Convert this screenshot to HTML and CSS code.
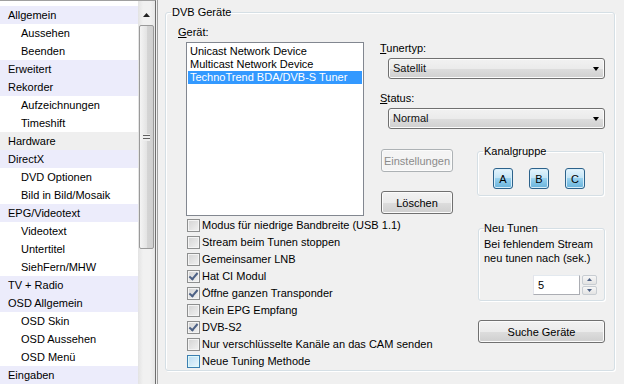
FILE: index.html
```html
<!DOCTYPE html>
<html lang="de">
<head>
  <meta charset="UTF-8" />
  <title>DVB Geräte</title>
  <link rel="stylesheet" href="styles.css">
</head>
<body>
  <div class="window">
    <!-- Settings tree -->
    <div class="tree">
      <ul class="tree-list">
        <li class="node top">Allgemein</li>
        <li class="node child">Aussehen</li>
        <li class="node child">Beenden</li>
        <li class="node top">Erweitert</li>
        <li class="node top">Rekorder</li>
        <li class="node child">Aufzeichnungen</li>
        <li class="node child">Timeshift</li>
        <li class="node top current">Hardware</li>
        <li class="node top">DirectX</li>
        <li class="node child">DVD Optionen</li>
        <li class="node child">Bild in Bild/Mosaik</li>
        <li class="node top">EPG/Videotext</li>
        <li class="node child">Videotext</li>
        <li class="node child">Untertitel</li>
        <li class="node child">SiehFern/MHW</li>
        <li class="node top">TV + Radio</li>
        <li class="node top">OSD Allgemein</li>
        <li class="node child">OSD Skin</li>
        <li class="node child">OSD Aussehen</li>
        <li class="node child">OSD Menü</li>
        <li class="node top">Eingaben</li>
      </ul>
      <div class="scrollbar">
        <div class="sb-btn">
          <svg width="7" height="4" viewBox="0 0 7 4"><path d="M0 4 L3.5 0 L7 4 Z" fill="#222"/></svg>
        </div>
        <div class="sb-thumb"><span class="grip"></span></div>
      </div>
    </div>

    <!-- Hardware page -->
    <div class="panel">
      <fieldset class="group main">
        <legend>DVB Geräte</legend>
        <div class="top-row">
          <div class="device-col">
            <div class="lbl"><u>G</u>erät:</div>
            <ul class="listbox">
              <li>Unicast Network Device</li>
              <li>Multicast Network Device</li>
              <li class="selected">TechnoTrend BDA/DVB-S Tuner</li>
            </ul>
          </div>
          <div class="settings-col">
            <div class="lbl"><u>T</u>unertyp:</div>
            <div class="combo">Satellit<span class="arrow"></span></div>
            <div class="lbl status-lbl"><u>S</u>tatus:</div>
            <div class="combo">Normal<span class="arrow"></span></div>
            <div class="action-row">
              <div class="action-btns">
                <button class="btn" disabled>Einstellungen</button>
                <button class="btn delete">Löschen</button>
              </div>
              <fieldset class="group channel">
                <legend>Kanalgruppe</legend>
                <button class="ch">A</button>
                <button class="ch">B</button>
                <button class="ch">C</button>
              </fieldset>
            </div>
          </div>
        </div>
        <div class="bottom-row">
          <ul class="checks">
            <li><span class="box"></span>Modus für niedrige Bandbreite (USB 1.1)</li>
            <li><span class="box"></span>Stream beim Tunen stoppen</li>
            <li><span class="box"></span>Gemeinsamer LNB</li>
            <li><span class="box checked"></span>Hat CI Modul</li>
            <li><span class="box checked"></span>Öffne ganzen Transponder</li>
            <li><span class="box"></span>Kein EPG Empfang</li>
            <li><span class="box checked"></span>DVB-S2</li>
            <li><span class="box"></span>Nur verschlüsselte Kanäle an das CAM senden</li>
            <li><span class="box hover"></span>Neue Tuning Methode</li>
          </ul>
          <div class="side">
            <fieldset class="group retune">
              <legend>Neu Tunen</legend>
              <p>Bei fehlendem Stream<br>neu tunen nach (sek.)</p>
              <div class="spin-row">
                <div class="spin-input">5</div>
                <div class="spin-btns">
                  <span class="spin-btn"><svg width="5" height="3" viewBox="0 0 5 3"><path d="M0 3 L2.5 0 L5 3 Z" fill="#4d6185"/></svg></span>
                  <span class="spin-btn"><svg width="5" height="3" viewBox="0 0 5 3"><path d="M0 0 L2.5 3 L5 0 Z" fill="#4d6185"/></svg></span>
                </div>
              </div>
            </fieldset>
            <button class="btn search">Suche Geräte</button>
          </div>
        </div>
      </fieldset>
    </div>
  </div>
</body>
</html>
```

FILE: styles.css
```css
/* Basic reset */
* {
  box-sizing: border-box;
  margin: 0;
  padding: 0;
}
body {
  background-color: #f0f0f0;
  color: #000;
  font-family: "Liberation Sans", Arial, sans-serif;
  font-size: 11px;
  line-height: 13px;
  width: 624px;
  height: 384px;
  overflow: hidden;
}
ul {
  list-style: none;
}
.window {
  display: flex;
  height: 384px;
}

/* Left settings tree */
.tree {
  display: flex;
  width: 156px;
  height: 384px;
  background: #fff;
  border-top: 1px solid #a0a0a0;
  border-right: 1px solid #6d6d6d;
}
.tree-list {
  width: 138px;
  padding-top: 5px;
}
.node {
  height: 18px;
  line-height: 18px;
  white-space: nowrap;
}
.node.top {
  padding-left: 8px;
  background-color: #ececfb;
}
.node.top.current {
  background-color: #efefef;
}
.node.child {
  padding-left: 21px;
}
.scrollbar {
  width: 17px;
  padding-top: 5px;
  background: linear-gradient(to right, #e3e3e3, #f1f1f1 30%, #f1f1f1 70%, #e6e6e6);
}
.sb-btn {
  height: 18px;
  display: flex;
  justify-content: center;
  align-items: center;
}
.sb-thumb {
  height: 224px;
  margin: 1px 1px 0 1px;
  border: 1px solid #9a9a9a;
  border-radius: 2px;
  background: linear-gradient(to right, #f4f4f4, #e4e4e4 50%, #d5d5d5 51%, #cfcfcf);
  display: flex;
  justify-content: center;
  align-items: center;
}
.grip {
  width: 7px;
  height: 7px;
  background: repeating-linear-gradient(#eeeeee 0, #eeeeee 1px, #5f5f5f 1px, #5f5f5f 2px, #eeeeee 2px, #eeeeee 3px);
}

/* Right page */
.panel {
  flex: 1;
  margin-left: 1px;
  border-left: 1px solid #a0a0a0;
  padding: 6px 9px 0 7px;
}
.group {
  border: 1px solid #d5dfe5;
  border-radius: 3px;
  box-shadow: inset 1px 1px 0 #fff, 1px 1px 0 #fff;
}
.group legend {
  line-height: 13px;
}
.main {
  height: 365px;
  padding: 7px 9px 0 12px;
}
.main > legend {
  margin-left: -7px;
  padding: 0 1px;
}
.lbl {
  height: 13px;
}
.top-row {
  display: flex;
}
.device-col {
  width: 186px;
}
.listbox {
  margin: 3px 0 0 8px;
  width: 178px;
  height: 174px;
  background: #fff;
  border: 1px solid #828790;
  padding: 2px 1px;
}
.listbox li {
  height: 13px;
  padding-left: 2px;
  white-space: nowrap;
}
.listbox li.selected {
  background-color: #3399ff;
  color: #fff;
}
.settings-col {
  width: 224px;
  margin-left: 16px;
  padding-top: 16px;
}
.combo {
  position: relative;
  margin: 3px 0 0 8px;
  width: 217px;
  height: 21px;
  line-height: 19px;
  padding-left: 4px;
  border: 1px solid #707070;
  border-radius: 3px;
  background: linear-gradient(#f2f2f2, #ebebeb 50%, #dddddd 51%, #cfcfcf);
  box-shadow: inset 0 0 0 1px #fbfbfb;
  color: #111;
}
.combo .arrow {
  position: absolute;
  right: 5px;
  top: 8px;
  border-left: 3.5px solid transparent;
  border-right: 3.5px solid transparent;
  border-top: 4px solid #000;
}
.status-lbl {
  margin-top: 13px;
}
.action-row {
  display: flex;
  justify-content: space-between;
  margin-top: 20px;
}
.action-btns {
  margin-left: 1px;
  display: flex;
  flex-direction: column;
}
.btn {
  font-family: inherit;
  font-size: 11px;
  color: #000;
  width: 72px;
  height: 23px;
  border: 1px solid #707070;
  border-radius: 3px;
  background: linear-gradient(#f2f2f2, #ebebeb 50%, #dddddd 51%, #cfcfcf);
  box-shadow: inset 0 0 0 1px #fbfbfb;
}
.btn:disabled {
  color: #8b8b8b;
  border-color: #adb2b5;
  background: #f4f4f4;
}
.btn.delete {
  margin-top: 19px;
}
.channel {
  width: 127px;
  height: 51px;
  margin-top: -4px;
  padding: 10px 0 0 15px;
  display: flex;
  gap: 16px;
}
.channel legend {
  margin-left: -10px;
  padding: 0 1px;
}
.ch {
  font-family: inherit;
  font-size: 11px;
  width: 20px;
  height: 21px;
  color: #000;
  border: 1px solid #2c628b;
  border-radius: 3px;
  background: linear-gradient(#e5f4fc, #c4e5f6 45%, #98d1ef 50%, #68b3db);
  box-shadow: inset 0 0 0 1px #d8eefa;
}

/* Check boxes */
.bottom-row {
  display: flex;
  justify-content: space-between;
}
.checks {
  margin-top: 1px;
  padding-left: 9px;
}
.checks li {
  height: 17px;
  display: flex;
  align-items: center;
  white-space: nowrap;
}
.box {
  width: 13px;
  height: 13px;
  margin-right: 2px;
  border: 1px solid #8e8f8f;
  background: linear-gradient(135deg, #d3d3d3, #f2f2f2);
  box-shadow: inset 0 0 0 1px #f4f4f4;
  position: relative;
}
.box.checked::after {
  content: "";
  position: absolute;
  left: 3px;
  top: 0px;
  width: 3px;
  height: 7px;
  border-right: 2px solid #4d6185;
  border-bottom: 2px solid #4d6185;
  transform: rotate(40deg);
}
.box.hover {
  border-color: #3c7fb1;
  background: linear-gradient(135deg, #b9dcf2, #eaf6fd);
  box-shadow: inset 0 0 0 1px #def9fa;
}

/* Retune box */
.side {
  width: 127px;
  padding-top: 6px;
}
.retune {
  height: 79px;
  padding: 2px 7px 5px 5px;
}
.retune legend {
  padding: 0;
}
.retune p {
  line-height: 14px;
}
.spin-row {
  display: flex;
  justify-content: flex-end;
  margin-top: 10px;
  gap: 2px;
}
.spin-input {
  width: 47px;
  height: 20px;
  line-height: 18px;
  padding-left: 4px;
  background: #fff;
  border: 1px solid #abadb3;
  border-top-color: #e3e9ef;
  border-left-color: #e2e3ea;
}
.spin-btns {
  width: 15px;
  display: flex;
  flex-direction: column;
  gap: 1px;
}
.spin-btn {
  flex: 1;
  display: flex;
  justify-content: center;
  align-items: center;
  border: 1px solid #c8cdd2;
  border-radius: 2px;
  background: linear-gradient(#f7f7f7, #e3e3e3);
}
.btn.search {
  width: 127px;
  margin-top: 19px;
}
```
